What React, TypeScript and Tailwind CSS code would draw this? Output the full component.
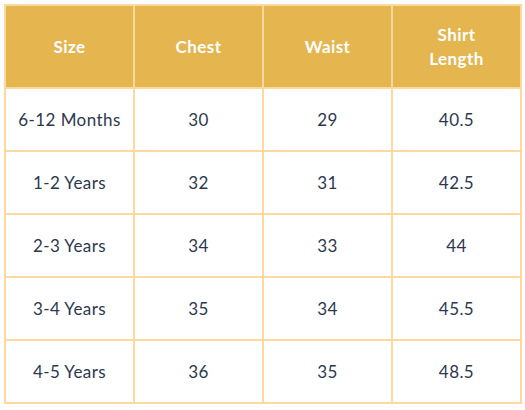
const rows = [
  ["6-12 Months", "30", "29", "40.5"],
  ["1-2 Years", "32", "31", "42.5"],
  ["2-3 Years", "34", "33", "44"],
  ["3-4 Years", "35", "34", "45.5"],
  ["4-5 Years", "36", "35", "48.5"],
];

export default function App() {
  return (
    <div className="w-[525px] h-[410px] bg-white pl-[4px] pt-[4px] font-['Lato',sans-serif]">
      <div className="w-[518px] grid grid-cols-4 gap-[2px] p-[2px] bg-[#fdd9a0]">
        {["Size", "Chest", "Waist"].map((h) => (
          <div
            key={h}
            className="h-[81px] flex items-center justify-center bg-[#e5b54f] text-white font-bold text-[17px] tracking-wide"
          >
            {h}
          </div>
        ))}
        <div className="h-[81px] flex flex-col items-center justify-center bg-[#e5b54f] text-white font-bold text-[17px] leading-6 tracking-wide text-center">
          <span>Shirt</span>
          <span>Length</span>
        </div>
        {rows.map((r) =>
          r.map((c, i) => (
            <div
              key={r[0] + i}
              className="h-[61px] flex items-center justify-center bg-white text-[#2c3850] text-[17px] tracking-wide"
            >
              {c}
            </div>
          ))
        )}
      </div>
    </div>
  );
}
